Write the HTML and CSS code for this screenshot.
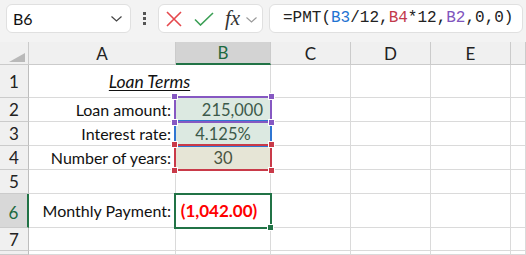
FILE: index.html
```html
<!DOCTYPE html>
<html lang="en">
<head>
    <meta charset="UTF-8">
    <title>Loan Terms</title>
    <link rel="stylesheet" href="styles.css">
</head>
<body>
    <div class="toolbar">
        <div class="namebox">
            <span>B6</span>
            <svg width="11" height="6" viewBox="0 0 11 6"><path d="M0.5 0.5 L5.5 5 L10.5 0.5" fill="none" stroke="#444" stroke-width="1.2"/></svg>
        </div>
        <div class="dots"><i></i><i></i><i></i></div>
        <div class="fnbox">
            <svg class="icon-x" width="16" height="16" viewBox="0 0 16 16"><path d="M1 1 L15 15 M15 1 L1 15" stroke="#e5484d" stroke-width="1.6"/></svg>
            <svg class="icon-ok" width="20" height="14" viewBox="0 0 20 14"><path d="M1 7.5 L6.5 13 L19 1" fill="none" stroke="#3b9f55" stroke-width="1.6"/></svg>
            <span class="fx">fx</span>
            <svg class="icon-down" width="11" height="6" viewBox="0 0 11 6"><path d="M0.5 0.5 L5.5 5 L10.5 0.5" fill="none" stroke="#999" stroke-width="1.1"/></svg>
        </div>
        <div class="formula">=PMT(<span class="ref-blue">B3</span>/12,<span class="ref-red">B4</span>*12,<span class="ref-purple">B2</span>,0,0)</div>
    </div>

    <div class="sheet">
        <div class="cell head corner">
            <svg width="16" height="9" viewBox="0 0 16 9"><polygon points="16,0 16,9 0,9" fill="#b9b9b9"/></svg>
        </div>
        <div class="cell head">A</div>
        <div class="cell head head-active-col">B</div>
        <div class="cell head">C</div>
        <div class="cell head">D</div>
        <div class="cell head">E</div>
        <div class="cell head"></div>

        <div class="cell head rowhead">1</div>
        <div class="cell title span2"><span>Loan Terms</span></div>
        <div class="cell"></div><div class="cell"></div><div class="cell"></div><div class="cell"></div>

        <div class="cell head rowhead">2</div>
        <div class="cell label">Loan amount:</div>
        <div class="cell num fill-green right">215,000
            <div class="range purple"><i class="h tl"></i><i class="h tr"></i><i class="h bl"></i><i class="h br"></i></div>
        </div>
        <div class="cell"></div><div class="cell"></div><div class="cell"></div><div class="cell"></div>

        <div class="cell head rowhead">3</div>
        <div class="cell label">Interest rate:</div>
        <div class="cell num fill-green">4.125%
            <div class="range blue"></div>
        </div>
        <div class="cell"></div><div class="cell"></div><div class="cell"></div><div class="cell"></div>

        <div class="cell head rowhead">4</div>
        <div class="cell label">Number of years:</div>
        <div class="cell num fill-tan">30
            <div class="range red"><i class="h tl"></i><i class="h tr"></i><i class="h bl"></i><i class="h br"></i></div>
        </div>
        <div class="cell"></div><div class="cell"></div><div class="cell"></div><div class="cell"></div>

        <div class="cell head rowhead">5</div>
        <div class="cell"></div><div class="cell"></div>
        <div class="cell"></div><div class="cell"></div><div class="cell"></div><div class="cell"></div>

        <div class="cell head rowhead head-active-row">6</div>
        <div class="cell label">Monthly Payment:</div>
        <div class="cell num result">(1,042.00)
            <div class="selection"><i class="fill-handle"></i></div>
        </div>
        <div class="cell"></div><div class="cell"></div><div class="cell"></div><div class="cell"></div>

        <div class="cell head rowhead">7</div>
        <div class="cell"></div><div class="cell"></div>
        <div class="cell"></div><div class="cell"></div><div class="cell"></div><div class="cell"></div>

        <div class="cell head rowhead"></div>
        <div class="cell"></div><div class="cell"></div>
        <div class="cell"></div><div class="cell"></div><div class="cell"></div><div class="cell"></div>
    </div>
</body>
</html>
```

FILE: styles.css
```css
body {
    margin: 0;
    width: 526px;
    height: 255px;
    overflow: hidden;
    background: #fff;
    font-family: "Lato", "Liberation Sans", sans-serif;
    color: #111;
}

/* formula bar */
.toolbar {
    height: 42px;
    box-sizing: border-box;
    padding-top: 4px;
    background: #f3f3f3;
    display: flex;
    align-items: flex-start;
}
.namebox {
    margin-left: 6px;
    width: 125px;
    height: 29px;
    box-sizing: border-box;
    padding: 0 8px 0 6px;
    background: #fff;
    border: 1px solid #e0e0e0;
    border-radius: 6px;
    display: flex;
    align-items: center;
    justify-content: space-between;
    font-size: 16px;
}
.dots {
    width: 27px;
    height: 29px;
    display: flex;
    flex-direction: column;
    align-items: center;
    justify-content: center;
    gap: 2px;
}
.dots i {
    width: 3px;
    height: 3px;
    background: #555;
}
.fnbox {
    width: 105px;
    height: 29px;
    box-sizing: border-box;
    padding-left: 7px;
    background: #fff;
    border: 1px solid #e0e0e0;
    border-radius: 6px;
    display: flex;
    align-items: center;
}
.icon-ok { margin-left: 12px; }
.fx {
    margin-left: 11px;
    font-family: "Liberation Serif", serif;
    font-style: italic;
    font-size: 21px;
    color: #333;
    line-height: 1;
}
.icon-down { margin-left: 6px; margin-top: 2px; }
.formula {
    margin-left: 6px;
    width: 254px;
    height: 29px;
    box-sizing: border-box;
    padding-left: 13px;
    background: #fff;
    border: 1px solid #e0e0e0;
    border-radius: 6px;
    font-family: "Liberation Mono", monospace;
    font-size: 16px;
    line-height: 27px;
    color: #222;
    white-space: nowrap;
}
.ref-blue { color: #1f74d2; }
.ref-red { color: #c23a4c; }
.ref-purple { color: #8055bd; }

/* sheet */
.sheet {
    display: grid;
    grid-template-columns: 29px 147px 95px 80px 80px 80px 1fr;
    grid-template-rows: 23px 33px 24px 24px 24px 24px 34px 23px 1fr;
    height: 213px;
}
.cell {
    position: relative;
    box-sizing: border-box;
    border-right: 1px solid #dadada;
    border-bottom: 1px solid #dadada;
    display: flex;
    align-items: center;
    font-size: 16px;
    white-space: nowrap;
}
.head {
    background: #f0f0f0;
    justify-content: center;
    border-color: #cbcbcb;
    font-size: 17px;
    color: #222;
}
.corner {
    align-items: flex-end;
    justify-content: flex-end;
    padding: 0 3px 2px 0;
}
.rowhead { border-right-color: #bdbdbd; }
.head-active-col {
    background: #d3d3d3;
    color: #1d6a40;
    border-bottom: 2px solid #217346;
}
.head-active-row {
    background: #d8d8d8;
    color: #1d6a40;
    border-right: 2px solid #217346;
    padding-top: 4px;
}
.span2 { grid-column: span 2; }
.title {
    justify-content: center;
    align-items: flex-end;
    padding-bottom: 5px;
    font-style: italic;
    font-size: 17.5px;
}
.title span {
    text-decoration: underline;
    text-underline-offset: 2px;
}
.label {
    justify-content: flex-end;
    padding-right: 4px;
}
.num {
    justify-content: center;
    color: #3c5a4a;
    font-size: 16.5px;
}
.num.right {
    justify-content: flex-end;
    padding-right: 7px;
}
.fill-green { background: #dce9e1; }
.fill-tan { background: #e6e5d6; color: #4a5440; }
.result {
    color: #ff0000;
    font-weight: bold;
    font-size: 17px;
    padding-right: 8px;
}

/* reference highlights over the cells */
.range {
    position: absolute;
    left: -2px;
    top: -2px;
    right: -2px;
    bottom: -2px;
    border: 2px solid currentColor;
    z-index: 2;
}
.range.purple { color: #8658c2; z-index: 3; }
.range.blue { color: #2f76d2; }
.range.red { color: #c93a49; z-index: 3; }
.h {
    position: absolute;
    width: 5px;
    height: 5px;
    background: currentColor;
    border: 1px solid #fff;
}
.h.tl { left: -5px; top: -5px; }
.h.tr { right: -5px; top: -5px; }
.h.bl { left: -5px; bottom: -5px; }
.h.br { right: -5px; bottom: -5px; }

.selection {
    position: absolute;
    left: -2px;
    top: -1px;
    right: -2px;
    bottom: -2px;
    border: 2px solid #217346;
    z-index: 2;
}
.fill-handle {
    position: absolute;
    right: -4px;
    bottom: -4px;
    width: 5px;
    height: 5px;
    background: #217346;
    border: 1px solid #fff;
}
```
